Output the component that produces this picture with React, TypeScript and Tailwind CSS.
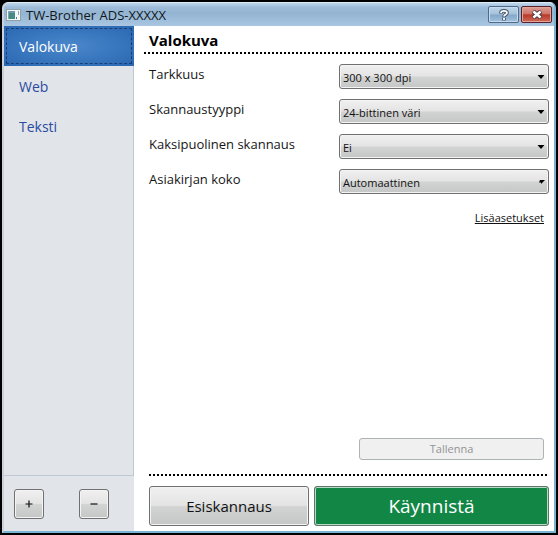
import React, { useState } from 'react';

const PROFILES = ['Valokuva', 'Web', 'Teksti'];

const SETTINGS = [
  { id: 'resolution', label: 'Tarkkuus', options: ['300 x 300 dpi'] },
  { id: 'scanType', label: 'Skannaustyyppi', options: ['24-bittinen väri'] },
  { id: 'duplex', label: 'Kaksipuolinen skannaus', options: ['Ei'] },
  { id: 'documentSize', label: 'Asiakirjan koko', options: ['Automaattinen'], clipped: true },
];

const buttonFace =
  'border border-[#707070] bg-[linear-gradient(to_bottom,#f0f0f0_0%,#e4e4e4_48%,#d2d3d3_52%,#c5c6c6_100%)] shadow-[inset_0_0_0_1px_#f4f4f4]';

const DottedLine: React.FC<{ className?: string }> = ({ className = '' }) => (
  <div
    className={`h-0.5 shrink-0 bg-[repeating-linear-gradient(to_right,#000_0px,#000_2px,transparent_2px,transparent_4px)] ${className}`}
  />
);

const AppIcon = () => (
  <svg className="h-3 w-4 shrink-0" viewBox="0 0 16 12" aria-hidden="true">
    <rect x="0.5" y="0.5" width="14" height="11" fill="#f4f8f8" stroke="#8fa2ac" />
    <rect x="2" y="2" width="7" height="8" fill="#458a83" />
    <rect x="2" y="2" width="7" height="2" fill="#6a9aa8" />
    <rect x="2" y="2" width="1" height="8" fill="#7fa9b0" />
    <rect x="10" y="8" width="1" height="2" fill="#597783" />
    <rect x="12" y="2" width="1" height="4" fill="#8aa7bb" />
  </svg>
);

const TitleBar = () => (
  <header className="flex h-[23px] shrink-0 items-center bg-[linear-gradient(to_bottom,#c0d7eb_0%,#9dbcd9_18%,#93b4d2_45%,#a9c7e2_100%)] px-0.5">
    <AppIcon />
    <h1 className="ml-1 flex-1 text-[13px] leading-5 text-[#111820]">TW-Brother ADS-XXXXX</h1>
    <div className="flex gap-0.5">
      <button
        aria-label="Ohje"
        className="flex h-[17px] w-[31px] items-center justify-center rounded-xs border border-[#506986] bg-[linear-gradient(to_bottom,#bfd5e9_0%,#a5c1db_48%,#84a7c8_52%,#a1c1dd_100%)] shadow-[inset_0_0_0_1px_#c6dbed]"
      >
        <svg className="h-3 w-3" viewBox="0 0 12 12" fill="none" aria-hidden="true">
          <path d="M3 4.5V3.5C3 1.2 9 1.2 9 3.8C9 5.6 6 5.4 6 8M6 8.8V11.5" stroke="#3d4e60" strokeWidth="3.6" />
          <path d="M3 4V3.5C3 1.2 9 1.2 9 3.8C9 5.6 6 5.4 6 7.6M6 9V11" stroke="#fff" strokeWidth="1.8" />
        </svg>
      </button>
      <button
        aria-label="Sulje"
        className="flex h-[17px] w-[31px] items-center justify-center rounded-xs border border-[#5b2028] bg-[linear-gradient(to_bottom,#dda096_0%,#ce7468_46%,#b8382a_52%,#cf6b56_100%)] shadow-[inset_0_0_0_1px_#e1a49a]"
      >
        <svg className="h-[9px] w-3" viewBox="0 0 12 9" fill="none" aria-hidden="true">
          <path d="M2 1.2L10 7.8M10 1.2L2 7.8" stroke="#4c3d46" strokeWidth="4.4" />
          <path d="M2.4 1.5L9.6 7.5M9.6 1.5L2.4 7.5" stroke="#fff" strokeWidth="2.4" />
        </svg>
      </button>
    </div>
  </header>
);

interface SidebarProps {
  active: string;
  onSelect: (profile: string) => void;
}

const Sidebar: React.FC<SidebarProps> = ({ active, onSelect }) => (
  <aside className="flex w-[130px] shrink-0 flex-col bg-[#e1e5e9]">
    <nav className="flex flex-1 flex-col border-r border-b border-[#bfc8d3]">
      {PROFILES.map((profile) => (
        <button
          key={profile}
          onClick={() => onSelect(profile)}
          className={`h-10 p-0.5 text-left text-[14px] ${
            profile === active
              ? '-mr-px bg-[radial-gradient(ellipse_at_center,#4b88cb_0%,#3775bd_55%,#2a67b1_100%)] text-white'
              : 'text-[#2b4a9f]'
          }`}
        >
          <span
            className={`flex h-full items-center border border-dashed pl-3 ${
              profile === active ? 'border-[#163e78]' : 'border-transparent'
            }`}
          >
            {profile}
          </span>
        </button>
      ))}
    </nav>
    <div className="flex h-[55px] shrink-0 items-center gap-[35px] pl-2.5">
      <button aria-label="Lisää" className={`flex size-[30px] items-center justify-center rounded-[3px] ${buttonFace}`}>
        <svg className="size-2" viewBox="0 0 8 8" aria-hidden="true">
          <path d="M0.5 4H7.5M4 0.5V7.5" stroke="#111" strokeWidth="1.2" />
        </svg>
      </button>
      <button aria-label="Poista" className={`flex size-[30px] items-center justify-center rounded-[3px] ${buttonFace}`}>
        <svg className="size-2" viewBox="0 0 8 8" aria-hidden="true">
          <path d="M0.5 4H7.5" stroke="#111" strokeWidth="1.2" />
        </svg>
      </button>
    </div>
  </aside>
);

interface SettingRowProps {
  id: string;
  label: string;
  options: string[];
  clipped?: boolean;
}

const SettingRow: React.FC<SettingRowProps> = ({ id, label, options, clipped }) => (
  <div className="flex items-start">
    <label htmlFor={id} className="flex-1 text-[13px] leading-5 text-[#151515]">
      {label}
    </label>
    <div className="relative w-[210px] shrink-0">
      <select
        id={id}
        className={`block h-[25px] w-full appearance-none rounded-[3px] pl-[3px] pr-4 pt-1 text-[11px] text-[#111] ${buttonFace}`}
      >
        {options.map((option) => (
          <option key={option}>{option}</option>
        ))}
      </select>
      <svg
        className="pointer-events-none absolute right-1 top-[11px] h-1 w-2"
        viewBox="0 0 8 4"
        fill="#000"
        aria-hidden="true"
      >
        <path d={clipped ? 'M3 0H8L4 4V2.5H2Z' : 'M0.5 0H7.5L4 4Z'} />
      </svg>
    </div>
  </div>
);

const App: React.FC = () => {
  const [active, setActive] = useState('Valokuva');

  return (
    <div className="flex min-h-screen flex-col bg-black p-0.5 font-['Open_Sans','Noto_Sans',sans-serif]">
      <div className="flex flex-1 flex-col overflow-hidden rounded-t-md border-2 border-t border-[#79b5d3] border-t-[#dcebf5] border-l-[#c8d1dc] bg-white">
        <TitleBar />
        <div className="flex flex-1">
          <Sidebar active={active} onSelect={setActive} />
          <main className="flex flex-1 flex-col bg-white pr-[5px] pb-[5px]">
            <h2 className="pl-[15px] pt-1 text-[15px] leading-5 font-bold text-black">{active}</h2>
            <DottedLine className="mt-0.5 mr-[7px] ml-2.5" />

            {/* Scan settings */}
            <form className="mt-2.5 ml-[15px] flex flex-col gap-2.5">
              {SETTINGS.map((setting) => (
                <SettingRow key={setting.id} {...setting} />
              ))}
            </form>
            <a href="#lisaasetukset" className="mt-4 mr-[5px] self-end text-[11px] leading-4 text-[#111] underline">
              Lisäasetukset
            </a>

            {/* Actions */}
            <button
              disabled
              className="mt-auto mr-[5px] h-[22px] w-[185px] self-end rounded-[3px] border border-[#adb2b5] bg-[#f0f0f0] text-[11px] text-[#939393]"
            >
              Tallenna
            </button>
            <DottedLine className="mt-3.5 ml-[15px]" />
            <div className="mt-2.5 ml-[15px] flex gap-[5px]">
              <button className={`h-10 w-40 shrink-0 rounded-[3px] text-[15px] text-[#111] ${buttonFace}`}>
                Esiskannaus
              </button>
              <button className="h-10 flex-1 rounded-[3px] border border-[#607567] bg-[#128745] text-[19px] text-white shadow-[inset_0_0_0_1px_#b8dbc7]">
                Käynnistä
              </button>
            </div>
          </main>
        </div>
      </div>
    </div>
  );
};

export default App;
